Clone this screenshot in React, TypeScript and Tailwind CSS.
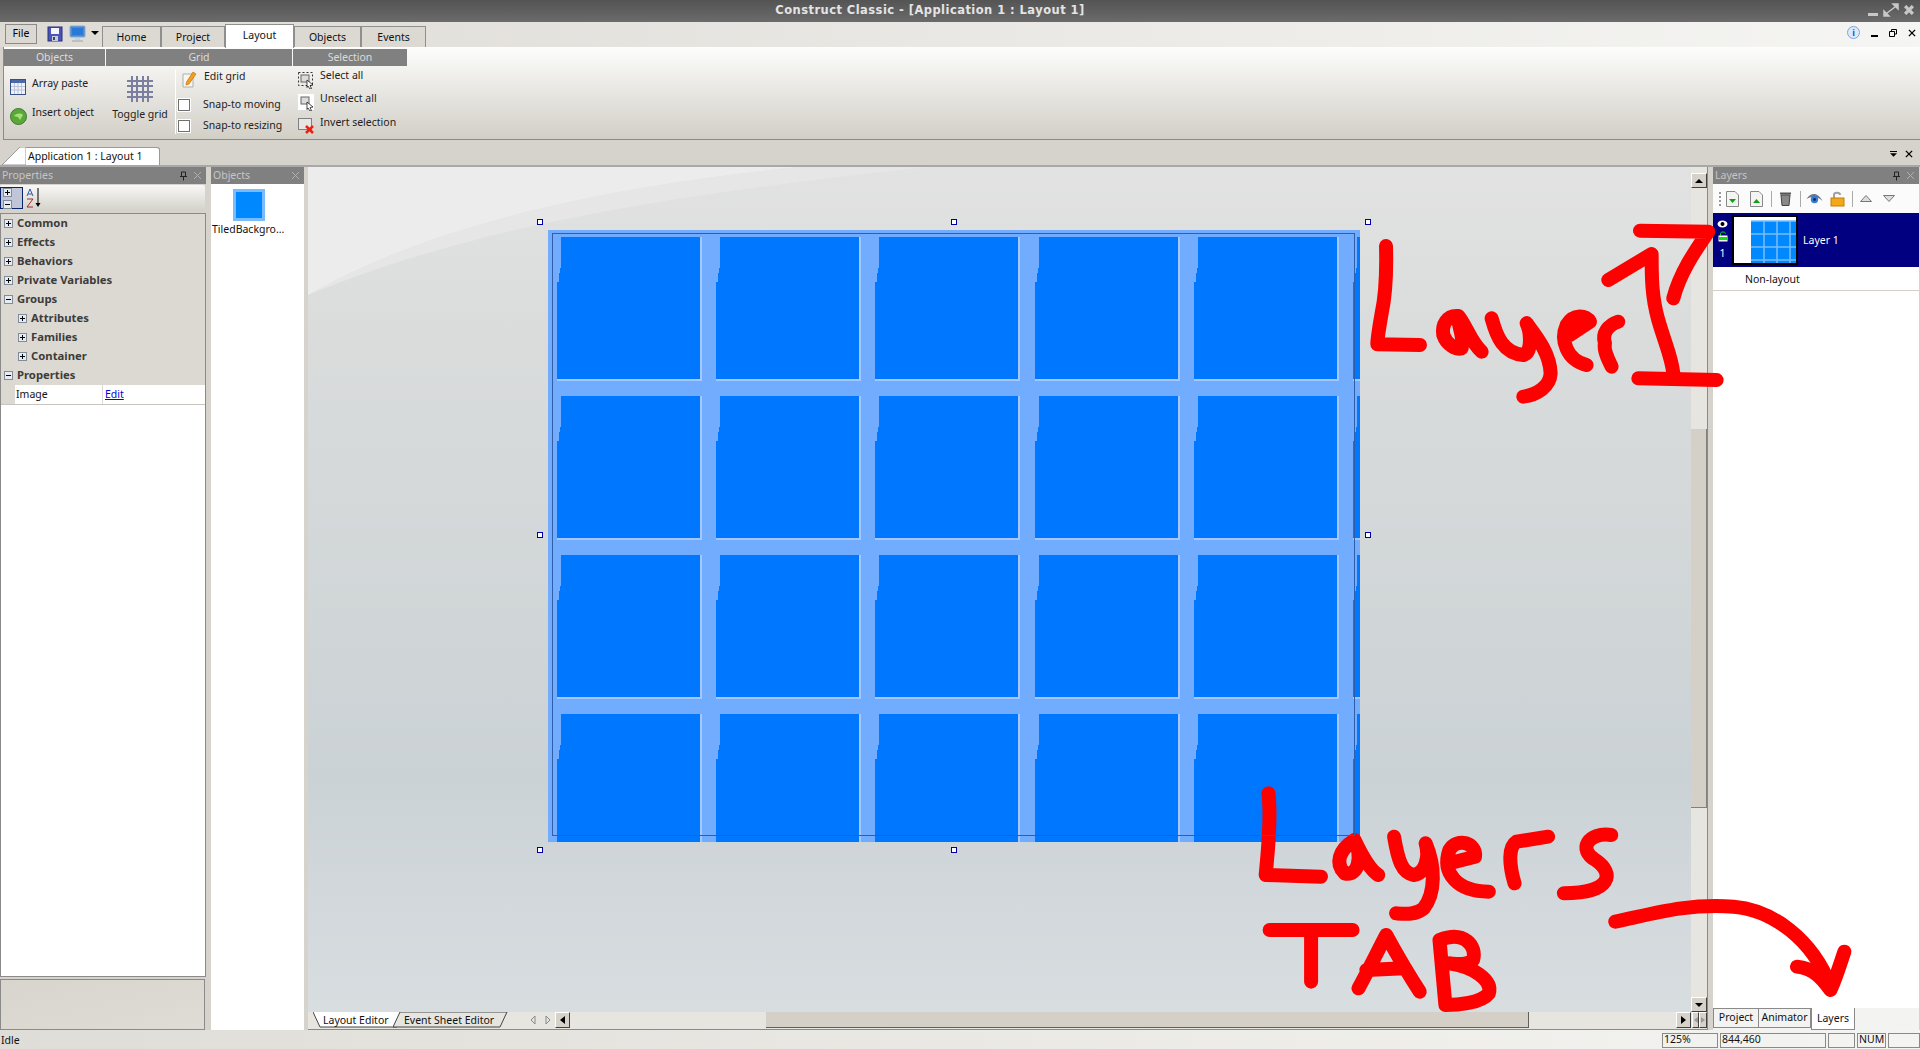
import React from "react";

const F = "font-['Noto_Sans',sans-serif]";

function Save() {
  return (
    <svg width="16" height="16" viewBox="0 0 16 16">
      <rect x="1" y="1" width="14" height="14" fill="#4a55b5" stroke="#28307a" />
      <rect x="4" y="2" width="8" height="6" fill="#f4f4ff" />
      <rect x="5" y="10" width="6" height="5" fill="#c8ccd8" />
      <rect x="6" y="11" width="2" height="3" fill="#3a4090" />
    </svg>
  );
}
function Monitor() {
  return (
    <svg width="18" height="18" viewBox="0 0 18 18">
      <rect x="1" y="1" width="15" height="11" rx="1" fill="#3c8ee0" stroke="#9aa8b8" />
      <rect x="3" y="3" width="11" height="7" fill="#2a78d8" />
      <rect x="6" y="13" width="5" height="2" fill="#c8d0d8" />
      <rect x="3" y="15" width="11" height="2" fill="#b8c0c8" />
    </svg>
  );
}
function Tri({ up, c = "#000", w = 8, h = 4 }: { up?: boolean; c?: string; w?: number; h?: number }) {
  return (
    <svg width={w} height={h} viewBox="0 0 8 4">
      <path d={up ? "M4 0L8 4H0Z" : "M0 0H8L4 4Z"} fill={c} />
    </svg>
  );
}
function Cross({ c = "#000", s = 9, sw = 2 }: { c?: string; s?: number; sw?: number }) {
  return (
    <svg width={s} height={s} viewBox="0 0 9 9">
      <path d="M1 1L8 8M8 1L1 8" stroke={c} strokeWidth={sw} fill="none" />
    </svg>
  );
}
function Pin({ c = "#222" }: { c?: string }) {
  return (
    <svg width="9" height="10" viewBox="0 0 9 10">
      <path d="M2.5 1H6.5V5.5H2.5ZM1 5.5H8M4.5 5.5V9.5" stroke={c} fill="none" />
    </svg>
  );
}
function PanelHeader({ title, pin = true }: { title: string; pin?: boolean }) {
  return (
    <div className="h-[17px] shrink-0 bg-[#808080] flex items-center pl-[2px] pr-[3px] text-[10.5px] text-[#c6c6c6]">
      <span className="flex-1 pt-[1px]">{title}</span>
      {pin && (
        <span className="mr-[5px] flex">
          <Pin />
        </span>
      )}
      <span className="mr-[1px] flex">
        <Cross c="#b0b0b0" s={9} sw={1} />
      </span>
    </div>
  );
}
function Box({ minus }: { minus?: boolean }) {
  return (
    <span className="w-[9px] h-[9px] shrink-0 border border-[#7f8c9c] bg-[#e8ecf0] relative flex items-center justify-center">
      <span className="w-[5px] h-[1px] bg-black" />
      {!minus && <span className="absolute w-[1px] h-[5px] bg-black" />}
    </span>
  );
}
function Group({ label, minus, indent }: { label: string; minus?: boolean; indent?: boolean }) {
  return (
    <div className={`h-[19px] flex items-center gap-[4px] ${indent ? "pl-[17px]" : "pl-[3px]"} font-bold text-[11.3px] text-[#3c3c3c]`}>
      <Box minus={minus} />
      <span>{label}</span>
    </div>
  );
}
function RTab({ label, w, active }: { label: string; w: string; active?: boolean }) {
  return (
    <div
      className={`${w} flex items-center justify-center text-[10.5px] text-[#111] border-[#8f8f8f] border-l border-r border-t ${
        active ? "h-[24px] bg-white -mb-[1px] pb-[2px] relative" : "h-[21px] bg-[#dcd9d2] pt-[1px]"
      }`}
    >
      {label}
    </div>
  );
}
function SecHead({ label, w }: { label: string; w: string }) {
  return (
    <div className={`${w} h-[17px] bg-[#808080] flex items-center justify-center pt-[1px] text-[10.5px] text-[#dcdcdc]`}>
      {label}
    </div>
  );
}
function Check() {
  return <span className="w-[12px] h-[12px] bg-white border border-[#707070] outline outline-1 outline-white block" />;
}
function Cell() {
  return (
    <div className="relative w-[145px] h-[144px] bg-[#0077ff] border-r-2 border-b-2 border-[#a6c8ff]">
      <div className="absolute left-0 top-0 w-[2px] h-[45px] bg-[#72acff]" />
      <div className="absolute left-0 top-0 w-[3px] h-[36px] bg-[#72acff]" />
      <div className="absolute left-0 top-0 w-[4px] h-[31px] bg-[#72acff]" />
    </div>
  );
}
function Handle({ cls }: { cls: string }) {
  return <div className={`absolute w-[6px] h-[6px] bg-white border border-[#0000a8] ${cls}`} />;
}
function SBtn({ children, cls = "" }: { children: React.ReactNode; cls?: string }) {
  return (
    <div className={`bg-[#d6d2ca] border-t border-l border-white border-r border-b border-r-[#404040] border-b-[#404040] flex items-center justify-center ${cls}`}>
      {children}
    </div>
  );
}
function Stat({ w, children }: { w: string; children?: React.ReactNode }) {
  return <div className={`${w} h-[15px] border border-[#8a8a8a] flex items-center pl-[1px] text-[10.5px] text-[#111]`}>{children}</div>;
}

export default function App() {
  const cells = Array.from({ length: 24 });
  return (
    <div className={`relative w-[1920px] h-[1049px] overflow-hidden flex flex-col bg-[#d6d3cc] ${F}`}>
      {/* title bar */}
      <div className="h-[22px] shrink-0 bg-gradient-to-b from-[#545454] to-[#6b6b6b] relative flex items-center justify-center pr-[60px] font-['DejaVu_Sans',sans-serif] text-[11.5px] font-bold text-[#e4e4e4] tracking-[0.45px]">
        <span>Construct Classic - [Application 1 : Layout 1]</span>
        <div className="absolute right-[6px] top-[3px] flex items-center gap-[5px]">
          <span className="w-[10px] h-[3px] bg-[#c8c8c8] mt-[8px]" />
          <svg width="16" height="14" viewBox="0 0 16 14">
            <path d="M1 13L6 13L1 8ZM15 1L10 1L15 6ZM4 10L12 4" fill="#c8c8c8" stroke="#c8c8c8" strokeWidth="1.5" />
          </svg>
          <Cross c="#c8c8c8" s={10} sw={3} />
        </div>
      </div>

      {/* ribbon tabs */}
      <div className="h-[25px] shrink-0 bg-gradient-to-r from-[#dedbd5] to-[#f5f5f3] flex items-end relative">
        <div className="ml-[5px] mb-[3px] w-[32px] h-[20px] border border-[#8a8a8a] bg-[#dcd9d2] flex items-center justify-center text-[10.5px]">File</div>
        <div className="ml-[10px] mb-[4px] flex items-center gap-[6px]">
          <Save />
          <Monitor />
        </div>
        <div className="ml-[4px] mb-[12px] flex">
          <Tri w={8} h={4} />
        </div>
        <div className="ml-[3px] flex items-end">
          <RTab label="Home" w="w-[59px]" />
          <RTab label="Project" w="w-[64px]" />
          <RTab label="Layout" w="w-[69px]" active />
          <RTab label="Objects" w="w-[67px]" />
          <RTab label="Events" w="w-[65px]" />
        </div>
        <div className="absolute right-[4px] top-[4px] flex items-center">
          <span className="w-[13px] h-[13px] rounded-full bg-[#dbe9fb] border border-[#78a8e8] flex items-center justify-center text-[9px] font-bold text-[#1858b8] mr-[11px]">i</span>
          <span className="w-[7px] h-[2px] bg-black mt-[6px] mr-[11px]" />
          <svg width="8" height="8" viewBox="0 0 8 8" className="mr-[11px]">
            <path d="M2.5 2.5V.5H7.5V5H5.5M.5 2.5H5.5V7.5H.5Z" fill="none" stroke="#000" />
          </svg>
          <Cross s={8} sw={1.5} />
        </div>
      </div>

      {/* ribbon */}
      <div className="h-[93px] shrink-0 ml-[3px] border-l border-b border-[#8a8a8a] bg-gradient-to-b from-[#fdfdfc] to-[#d2cfc7] pt-[2px] text-[10.5px] text-[#222] flex">
        <div className="w-[102px] flex flex-col">
          <SecHead label="Objects" w="w-[101px]" />
          <div className="flex-1 flex flex-col pl-[6px] pt-[11px]">
            <div className="flex items-start gap-[6px] h-[31px]">
              <svg width="16" height="16" viewBox="0 0 16 16" className="mt-[2px]">
                <rect x=".5" y=".5" width="15" height="15" fill="#f0f2f8" stroke="#38508a" />
                <rect x="1" y="1" width="14" height="3" fill="#4a6aa8" />
                <path d="M4.5 4V15M8 4V15M11.5 4V15M1 7.5H15M1 11H15" stroke="#b8c4d8" />
              </svg>
              <span className="-mt-[1px]">Array paste</span>
            </div>
            <div className="flex items-start gap-[5px]">
              <svg width="17" height="17" viewBox="0 0 17 17">
                <circle cx="8.5" cy="8.5" r="8" fill="#5aa83a" stroke="#3e7a2a" />
                <path d="M4 8C7 5 11 5 13 7L10 12L8 9Z" fill="#a8e078" />
              </svg>
              <span className="-mt-[3px]">Insert object</span>
            </div>
          </div>
        </div>
        <div className="w-[187px] flex flex-col">
          <SecHead label="Grid" w="w-[186px]" />
          <div className="flex-1 flex">
            <div className="w-[69px] flex flex-col items-center pt-[9px] pr-[1px]">
              <svg width="28" height="28" viewBox="0 0 28 28">
                <path d="M6 1V27M11 1V27M17 1V27M22 1V27M1 6H27M1 11H27M17 17H27M1 17H27M1 22H27" stroke="#7a7f9f" strokeWidth="2" fill="none" />
              </svg>
              <span className="mt-[4px] whitespace-nowrap">Toggle grid</span>
            </div>
            <div className="w-[1px] h-[64px] bg-[#8f8f8f] mt-[4px] border-r border-white" />
            <div className="flex flex-col pl-[2px] pt-[4px]">
              <div className="h-[24px] flex items-start">
                <svg width="16" height="17" viewBox="0 0 16 17" className="ml-[4px] mt-[1px]">
                  <path d="M1 3H11V16H1Z" fill="#f6f6f2" stroke="#b0b0a8" />
                  <path d="M11 1L14 3L7 13L4 14L4.5 11Z" fill="#f0a020" stroke="#c87010" strokeWidth=".7" />
                </svg>
                <span className="ml-[6px] -mt-[1px]">Edit grid</span>
              </div>
              <div className="h-[21px] flex items-center">
                <Check />
                <span className="ml-[13px]">Snap-to moving</span>
              </div>
              <div className="h-[21px] flex items-center">
                <Check />
                <span className="ml-[13px]">Snap-to resizing</span>
              </div>
            </div>
          </div>
        </div>
        <div className="w-[115px] flex flex-col">
          <SecHead label="Selection" w="w-[114px]" />
          <div className="flex-1 flex flex-col pl-[5px] pt-[3px]">
            <div className="h-[23px] flex items-start gap-[6px]">
              <svg width="16" height="17" viewBox="0 0 16 17" className="mt-[3px]">
                <rect x=".5" y=".5" width="14" height="13" fill="none" stroke="#333" strokeDasharray="2 2" />
                <rect x="3" y="3" width="8" height="7" fill="#dcdcdc" stroke="#666" />
                <path d="M9 8L15 13L12 13.5L13.5 16.5L12 17L10 14L9 15.5Z" fill="#fff" stroke="#000" strokeWidth=".7" />
              </svg>
              <span className="-mt-[1px]">Select all</span>
            </div>
            <div className="h-[24px] flex items-start gap-[6px]">
              <svg width="16" height="17" viewBox="0 0 16 17" className="mt-[2px]">
                <rect width="16" height="16" fill="#fff" />
                <rect x="3" y="3" width="8" height="7" fill="#dcdcdc" stroke="#666" />
                <path d="M9 8L15 13L12 13.5L13.5 16.5L12 17L10 14L9 15.5Z" fill="#fff" stroke="#000" strokeWidth=".7" />
              </svg>
              <span className="-mt-[1px]">Unselect all</span>
            </div>
            <div className="flex items-start gap-[6px]">
              <svg width="16" height="16" viewBox="0 0 16 16" className="mt-[2px]">
                <rect x=".5" y=".5" width="13" height="11" fill="#e6e6e6" stroke="#808080" />
                <path d="M8 8L15 15M15 8L8 15" stroke="#f02010" strokeWidth="2.5" />
              </svg>
              <span className="-mt-[1px]">Invert selection</span>
            </div>
          </div>
        </div>
      </div>

      {/* doc tab bar */}
      <div className="h-[27px] shrink-0 bg-[#d6d3cc] flex items-end relative border-b-2 border-[#a8a8a8]">
        <svg width="24" height="18" viewBox="0 0 24 18" className="ml-[2px]">
          <path d="M0 18L18 0H24V18Z" fill="#fff" stroke="#9a9a9a" />
        </svg>
        <div className="w-[134px] h-[18px] bg-white border-t border-r border-[#9a9a9a] rounded-tr-[3px] text-[10.5px] text-[#111] flex items-center pl-[2px] pt-[1px]">
          Application 1 : Layout 1
        </div>
        <div className="absolute right-[7px] top-[10px] flex items-center gap-[8px]">
          <span className="flex flex-col gap-[1px]">
            <span className="w-[7px] h-[1px] bg-black" />
            <Tri w={7} h={4} />
          </span>
          <Cross s={8} sw={1.5} />
        </div>
      </div>

      {/* main */}
      <div className="h-[863px] shrink-0 flex">
        {/* properties */}
        <div className="w-[206px] shrink-0 flex flex-col">
          <PanelHeader title="Properties" />
          <div className="h-[26px] mt-[1px] shrink-0 mr-[1px] bg-gradient-to-b from-[#f8f8f6] to-[#d4d1c9] flex items-center rounded-[2px]">
            <span className="w-[23px] h-[22px] bg-[#c0c6d8] border border-[#0a246a] flex flex-col gap-[3px] items-start justify-center pl-[2px]">
              <Box />
              <Box minus />
            </span>
            <svg width="18" height="22" viewBox="0 0 18 22" className="ml-[2px]">
              <path d="M2 9L5 2L8 9M3 7H7" stroke="#2a5ab8" fill="none" />
              <path d="M2 12H8L2 20H8" stroke="#a02a2a" fill="none" />
              <path d="M13 1V18" stroke="#000" />
              <path d="M10.5 16H15.5L13 20Z" fill="#000" />
            </svg>
          </div>
          <div className="h-[764px] mt-[2px] shrink-0 border border-[#8a8a8a] bg-white flex flex-col">
            <div className="bg-[#dcd9d2]">
              <Group label="Common" />
              <Group label="Effects" />
              <Group label="Behaviors" />
              <Group label="Private Variables" />
              <Group label="Groups" minus />
              <Group label="Attributes" indent />
              <Group label="Families" indent />
              <Group label="Container" indent />
              <Group label="Properties" minus />
              <div className="h-[20px] flex items-stretch pl-[14px] bg-[#dcd9d2] border-b border-[#c8c5be] text-[10.5px]">
                <div className="w-[87px] bg-white flex items-center pl-[1px] text-[#111]">Image</div>
                <div className="flex-1 ml-[1px] bg-white flex items-center pl-[2px] text-[#0000e0] underline">Edit</div>
              </div>
            </div>
          </div>
          <div className="h-[51px] mt-[2px] mr-[1px] shrink-0 border border-[#8a8a8a] bg-gradient-to-br from-[#d8d5ce] to-[#dfdcd6]" />
        </div>

        {/* objects */}
        <div className="w-[93px] shrink-0 ml-[5px] flex flex-col">
          <PanelHeader title="Objects" pin={false} />
          <div className="flex-1 bg-white flex flex-col pt-[5px] overflow-hidden">
            <div className="ml-[22px] w-[32px] h-[32px] bg-[#0088ff] border-[3px] border-[#78bcff]" />
            <div className="text-[10.5px] text-[#111] whitespace-nowrap mt-[1px] pl-[1px]">TiledBackgro…</div>
          </div>
        </div>

        {/* canvas + scrollbars */}
        <div className="w-[1400px] shrink-0 ml-[4px] flex flex-col border-r border-[#8a8a8a]">
          <div className="h-[845px] shrink-0 flex">
            <div className="flex-1 relative overflow-hidden bg-[linear-gradient(to_bottom,#e2e2e2_0%,#dadcdc_20%,#cbd2d5_72%,#d8dde0_100%)]">
              <svg className="absolute left-0 top-0" width="1383" height="200" viewBox="0 0 1383 200">
                <path d="M0 128C120 60 280 22 490 0H0Z" fill="#ececec" />
                <path d="M0 128C160 62 340 30 620 0H490C280 22 120 60 0 128Z" fill="#e6e6e6" />
              </svg>
              <div className="absolute left-[240px] top-[63px] w-[812px] h-[612px] bg-[#72acff] overflow-hidden">
                <div className="absolute left-[4px] top-[3px] w-[803px] h-[603px] border border-[#2f5fa8] z-10" />
                <div className="pl-[9px] pt-[7px] grid grid-cols-[repeat(6,159.2px)] grid-rows-[repeat(4,159px)]">
                  {cells.map((_, i) => (
                    <Cell key={i} />
                  ))}
                </div>
              </div>
              <Handle cls="left-[229px] top-[52px]" />
              <Handle cls="left-[643px] top-[52px]" />
              <Handle cls="left-[1057px] top-[52px]" />
              <Handle cls="left-[229px] top-[365px]" />
              <Handle cls="left-[1057px] top-[365px]" />
              <Handle cls="left-[229px] top-[680px]" />
              <Handle cls="left-[643px] top-[680px]" />
            </div>
            <div className="w-[16px] shrink-0 bg-[#e6e5e0] flex flex-col">
              <SBtn cls="h-[15px] mt-[6px] shrink-0">
                <Tri up w={8} h={4} />
              </SBtn>
              <div className="h-[241px] shrink-0" />
              <div className="h-[379px] shrink-0 bg-[#d4d0c8] border-b border-r border-[#808080]" />
              <div className="flex-1" />
              <SBtn cls="h-[15px] shrink-0">
                <Tri w={8} h={4} />
              </SBtn>
            </div>
          </div>
          <div className="h-[18px] shrink-0 bg-[#e6e5e0] flex items-start border-b border-[#8a8a8a] relative">
            <svg width="115" height="16" viewBox="0 0 115 16" className="ml-[5px] shrink-0">
              <path d="M0 0L7 15H84L90 0" fill="#fff" stroke="#444" />
            </svg>
            <span className="absolute left-[15px] top-[1px] text-[10.5px] text-[#111]">Layout Editor</span>
            <svg width="115" height="16" viewBox="0 0 115 16" className="absolute left-[85px] top-0">
              <path d="M0 15L7 0H114L107 15Z" fill="#e6e5e0" stroke="#444" />
            </svg>
            <span className="absolute left-[96px] top-[1px] text-[10.5px] text-[#111]">Event Sheet Editor</span>
            <span className="absolute left-[222px] top-[3px] flex gap-[9px]">
              <svg width="6" height="10" viewBox="0 0 6 10">
                <path d="M5 1L1 5L5 9Z" fill="none" stroke="#888" />
              </svg>
              <svg width="6" height="10" viewBox="0 0 6 10">
                <path d="M1 1L5 5L1 9Z" fill="none" stroke="#888" />
              </svg>
            </span>
            <SBtn cls="absolute left-[247px] top-0 w-[15px] h-[16px]">
              <svg width="5" height="8" viewBox="0 0 5 8">
                <path d="M5 0V8L0 4Z" fill="#000" />
              </svg>
            </SBtn>
            <div className="absolute left-[458px] top-0 w-[763px] h-[16px] bg-[#d4d0c8] border-b border-r border-[#606060]" />
            <SBtn cls="absolute left-[1368px] top-0 w-[15px] h-[16px]">
              <svg width="5" height="8" viewBox="0 0 5 8">
                <path d="M0 0V8L5 4Z" fill="#000" />
              </svg>
            </SBtn>
            <SBtn cls="absolute left-[1384px] top-0 w-[7px] h-[16px]">
              <svg width="4" height="6" viewBox="0 0 4 6">
                <path d="M4 0V6L0 3Z" fill="#999" />
              </svg>
            </SBtn>
            <SBtn cls="absolute left-[1391px] top-0 w-[8px] h-[16px]">
              <svg width="4" height="6" viewBox="0 0 4 6">
                <path d="M0 0V6L4 3Z" fill="#999" />
              </svg>
            </SBtn>
          </div>
        </div>

        {/* layers */}
        <div className="w-[206px] shrink-0 ml-[5px] flex flex-col bg-white">
          <PanelHeader title="Layers" />
          <div className="h-[29px] shrink-0 bg-[#fbfbfb] flex items-center">
            <span className="ml-[6px] w-[2px] h-[14px] border-l-2 border-dotted border-[#999]" />
            <svg width="13" height="16" viewBox="0 0 13 16" className="ml-[5px]">
              <path d="M.5.5H9L12.5 4V15.5H.5Z" fill="#f4f4f4" stroke="#888" />
              <path d="M3 8H10L6.5 12Z" fill="#10a010" />
            </svg>
            <svg width="13" height="16" viewBox="0 0 13 16" className="ml-[11px]">
              <path d="M.5.5H9L12.5 4V15.5H.5Z" fill="#f4f4f4" stroke="#888" />
              <path d="M3 12H10L6.5 8Z" fill="#10a010" />
            </svg>
            <span className="ml-[8px] w-[1px] h-[16px] bg-[#aaa]" />
            <svg width="13" height="15" viewBox="0 0 13 15" className="ml-[7px]">
              <path d="M1 2.5H12" stroke="#555" strokeWidth="2" />
              <path d="M2 4H11L10 14.5H3Z" fill="#888" stroke="#444" />
            </svg>
            <span className="ml-[8px] w-[1px] h-[16px] bg-[#aaa]" />
            <svg width="17" height="13" viewBox="0 0 17 13" className="ml-[5px]">
              <path d="M.5 7C5 0 12 0 16.5 9C12 4 5 4 .5 7Z" fill="#6a7a8a" />
              <circle cx="8.5" cy="7.5" r="3.7" fill="#3a7ad0" />
              <circle cx="8.5" cy="7.5" r="1.4" fill="#0a2a60" />
            </svg>
            <svg width="15" height="16" viewBox="0 0 15 16" className="ml-[7px]">
              <path d="M4 7V4C4 1 10 1 10 4" fill="none" stroke="#a0a0a0" strokeWidth="2" />
              <rect x="1" y="7" width="13" height="8" fill="#f4a818" stroke="#c08010" />
            </svg>
            <span className="ml-[7px] w-[1px] h-[16px] bg-[#aaa]" />
            <span className="ml-[7px] flex">
              <svg width="12" height="7" viewBox="0 0 12 7">
                <path d="M6 .5L11.5 6.5H.5Z" fill="#ddd" stroke="#777" />
              </svg>
            </span>
            <span className="ml-[11px] flex">
              <svg width="12" height="7" viewBox="0 0 12 7">
                <path d="M.5 .5H11.5L6 6.5Z" fill="#ddd" stroke="#777" />
              </svg>
            </span>
          </div>
          <div className="h-[54px] shrink-0 bg-[#000080] flex items-center text-[10.5px] text-white">
            <div className="w-[19px] flex flex-col items-center gap-[3px] pt-[1px]">
              <svg width="11" height="8" viewBox="0 0 11 8">
                <ellipse cx="5.5" cy="4" rx="5" ry="3.5" fill="#fff" />
                <circle cx="5.5" cy="4" r="2" fill="#000" />
              </svg>
              <svg width="10" height="11" viewBox="0 0 10 11">
                <path d="M2.5 4.5V2.5C2.5.5 7.5.5 7.5 2.5" fill="none" stroke="#10e010" />
                <rect x=".5" y="4.5" width="9" height="6" fill="#fff" />
                <rect x="1" y="6" width="8" height="3" fill="#10e010" />
              </svg>
              <span className="mt-[1px]">1</span>
            </div>
            <svg width="66" height="50" viewBox="0 0 66 50" className="shrink-0">
              <rect x="1" y="1" width="64" height="48" fill="#fff" stroke="#000" strokeWidth="2" />
              <rect x="19" y="6" width="45" height="42" fill="#0088ff" />
              <path d="M19 6H64M19 19H64M19 32H64M19 45H64M32 6V48M45 6V48M58 6V48" stroke="#78bcff" strokeWidth="1.5" />
            </svg>
            <span className="ml-[5px] pt-[1px]">Layer 1</span>
          </div>
          <div className="h-[24px] shrink-0 border-t border-white border-b border-b-[#d4d0c8] flex items-center pl-[32px] pt-[1px] text-[10.5px] text-[#111]">
            Non-layout
          </div>
          <div className="flex-1" />
          <div className="h-[22px] shrink-0 bg-[#f3f3f1] flex items-start">
            <div className="w-[46px] h-[20px] border border-[#8a8a8a] flex items-center justify-center text-[10.5px] text-[#111]">Project</div>
            <div className="w-[52px] h-[20px] border border-l-0 border-[#8a8a8a] flex items-center justify-center text-[10.5px] text-[#111]">Animator</div>
            <div className="w-[44px] h-[22px] bg-white border border-t-0 border-[#8a8a8a] flex items-center justify-center text-[10.5px] text-[#111]">Layers</div>
          </div>
        </div>
      </div>

      {/* status */}
      <div className="h-[19px] shrink-0 bg-gradient-to-r from-[#dfddd7] to-[#f4f4f2] flex items-center relative text-[10.5px] text-[#111] pl-[1px]">
        <span className="flex-1 pt-[3px]">Idle</span>
        <div className="flex items-center gap-[2px] mt-[1px]">
          <Stat w="w-[56px]">125%</Stat>
          <Stat w="w-[106px]">844,460</Stat>
          <Stat w="w-[27px]" />
          <Stat w="w-[29px]">NUM</Stat>
          <Stat w="w-[32px]" />
        </div>
      </div>

      {/* red handwritten annotations (freehand drawing over the screenshot) */}
      <svg className="absolute left-0 top-0 pointer-events-none blur-[0.6px]" width="1920" height="1049" viewBox="0 0 1920 1049" fill="none">
        <g transform="translate(1280 210) scale(0.3333)" stroke="#ff0000" strokeLinecap="round" strokeLinejoin="round" strokeWidth="42">
          <path d="M318 108C320 180 318 250 305 310C298 350 292 395 292 403L420 405" />
          <path d="M535 318C500 315 485 345 490 375C500 405 530 420 545 415C555 380 530 340 535 318C555 340 575 400 605 425" />
          <path d="M635 325C650 380 670 430 730 435C760 425 750 360 740 340C770 380 810 430 812 490C810 530 770 555 730 560" />
          <path d="M870 375L930 335C920 315 880 310 860 345C840 390 860 450 920 465" />
          <path d="M995 470C985 450 970 420 975 400C965 370 985 345 1015 335" />
          <path d="M985 210L1115 132C1115 200 1115 260 1135 330C1155 400 1175 440 1180 490" />
          <path d="M1075 505L1310 510" />
          <path d="M1080 62L1285 65C1240 130 1200 190 1180 265" />
        </g>
        <g transform="translate(1240 760) scale(0.395 0.3333)" stroke="#ff0000" strokeLinecap="round" strokeLinejoin="round">
          <g strokeWidth="14">
            <path vectorEffect="non-scaling-stroke" d="M72 100C80 180 70 280 65 345L205 350" />
            <path vectorEffect="non-scaling-stroke" d="M290 240C250 270 240 310 265 340C300 350 310 290 290 240C310 290 330 330 350 345" />
            <path vectorEffect="non-scaling-stroke" d="M390 230C400 300 410 340 440 345C470 340 480 290 470 250C495 320 495 400 465 445C445 465 420 462 395 460" />
            <path vectorEffect="non-scaling-stroke" d="M530 310L595 290C600 250 550 230 530 270C510 340 550 395 630 395" />
            <path vectorEffect="non-scaling-stroke" d="M695 370C680 310 680 260 700 245L780 230" />
            <path vectorEffect="non-scaling-stroke" d="M940 225C880 215 855 270 900 300C950 340 940 400 820 400" />
            <path vectorEffect="non-scaling-stroke" d="M75 510L285 510M180 510L180 665" />
            <path vectorEffect="non-scaling-stroke" d="M300 685C330 620 350 570 370 525C400 590 430 650 455 695M320 630L415 625" />
            <path vectorEffect="non-scaling-stroke" d="M505 540L520 735M505 540C570 510 600 560 590 600C570 620 540 610 530 610C590 620 640 660 630 700C610 730 550 735 520 735" />
            <path vectorEffect="non-scaling-stroke" d="M950 485C1050 460 1130 430 1250 440C1350 450 1450 540 1495 680" />
            <path vectorEffect="non-scaling-stroke" d="M1410 620C1450 625 1470 650 1495 690C1510 650 1520 610 1530 575" />
          </g>
        </g>
      </svg>
    </div>
  );
}
